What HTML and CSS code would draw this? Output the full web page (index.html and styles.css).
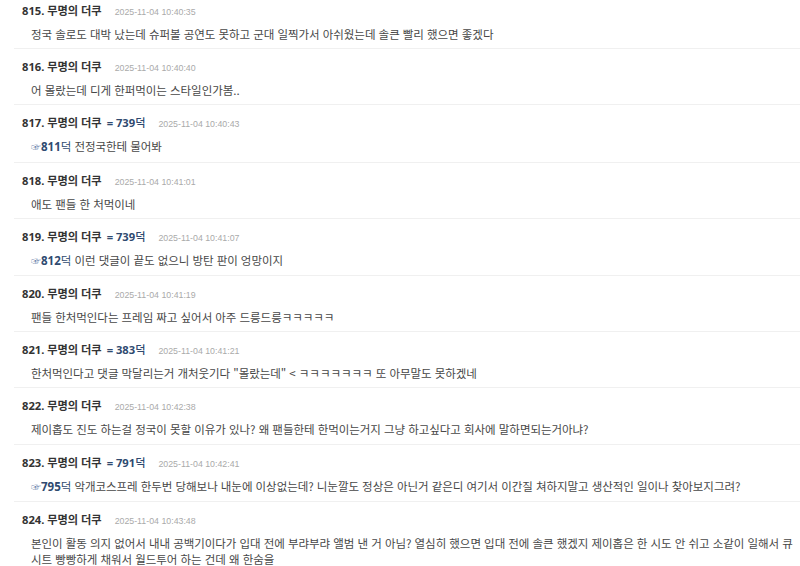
FILE: index.html
```html
<!DOCTYPE html>
<html lang="ko">
<head>
<meta charset="utf-8">
<link rel="stylesheet" href="styles.css">
</head>
<body>
<div class="list">
  <div class="item">
    <div class="head"><span class="name">815. 무명의 더쿠</span><span class="time">2025-11-04 10:40:35</span></div>
    <div class="body">정국 솔로도 대박 났는데 슈퍼볼 공연도 못하고 군대 일찍가서 아쉬웠는데 솔큰 빨리 했으면 좋겠다</div>
  </div>
  <div class="item">
    <div class="head"><span class="name">816. 무명의 더쿠</span><span class="time">2025-11-04 10:40:40</span></div>
    <div class="body">어 몰랐는데 디게 한퍼먹이는 스타일인가봄..</div>
  </div>
  <div class="item">
    <div class="head"><span class="name">817. 무명의 더쿠</span><span class="ref"><b>= 739</b>덕</span><span class="time">2025-11-04 10:40:43</span></div>
    <div class="body"><span class="reply"><span class="hand">☞</span><b>811</b>덕</span> 전정국한테 물어봐</div>
  </div>
  <div class="item">
    <div class="head"><span class="name">818. 무명의 더쿠</span><span class="time">2025-11-04 10:41:01</span></div>
    <div class="body">애도 팬들 한 처먹이네</div>
  </div>
  <div class="item">
    <div class="head"><span class="name">819. 무명의 더쿠</span><span class="ref"><b>= 739</b>덕</span><span class="time">2025-11-04 10:41:07</span></div>
    <div class="body"><span class="reply"><span class="hand">☞</span><b>812</b>덕</span> 이런 댓글이 끝도 없으니 방탄 판이 엉망이지</div>
  </div>
  <div class="item">
    <div class="head"><span class="name">820. 무명의 더쿠</span><span class="time">2025-11-04 10:41:19</span></div>
    <div class="body">팬들 한처먹인다는 프레임 짜고 싶어서 아주 드릉드릉ㅋㅋㅋㅋㅋ</div>
  </div>
  <div class="item">
    <div class="head"><span class="name">821. 무명의 더쿠</span><span class="ref"><b>= 383</b>덕</span><span class="time">2025-11-04 10:41:21</span></div>
    <div class="body">한처먹인다고 댓글 막달리는거 개처웃기다 "몰랐는데" &lt; ㅋㅋㅋㅋㅋㅋㅋ 또 아무말도 못하겠네</div>
  </div>
  <div class="item">
    <div class="head"><span class="name">822. 무명의 더쿠</span><span class="time">2025-11-04 10:42:38</span></div>
    <div class="body">제이홉도 진도 하는걸 정국이 못할 이유가 있나? 왜 팬들한테 한먹이는거지 그냥 하고싶다고 회사에 말하면되는거아냐?</div>
  </div>
  <div class="item">
    <div class="head"><span class="name">823. 무명의 더쿠</span><span class="ref"><b>= 791</b>덕</span><span class="time">2025-11-04 10:42:41</span></div>
    <div class="body"><span class="reply"><span class="hand">☞</span><b>795</b>덕</span> 악개코스프레 한두번 당해보나 내눈에 이상없는데? 니눈깔도 정상은 아닌거 같은디 여기서 이간질 쳐하지말고 생산적인 일이나 찾아보지그려?</div>
  </div>
  <div class="item">
    <div class="head"><span class="name">824. 무명의 더쿠</span><span class="time">2025-11-04 10:43:48</span></div>
    <div class="body">본인이 활동 의지 없어서 내내 공백기이다가 입대 전에 부랴부랴 앨범 낸 거 아님? 열심히 했으면 입대 전에 솔큰 했겠지 제이홉은 한 시도 안 쉬고 소같이 일해서 큐시트 빵빵하게 채워서 월드투어 하는 건데 왜 한숨을</div>
  </div>
</div>
</body>
</html>
```

FILE: styles.css
```css
html, body {
  margin: 0;
  padding: 0;
  background: #ffffff;
  overflow: hidden;
}

.list {
  margin-top: -8px;
  padding-left: 14px;
  font-family: "Noto Sans CJK KR", "Noto Sans", sans-serif;
}

.item {
  border-top: 1px solid #f0f0f0;
  padding-top: 9px;
  padding-bottom: 6.2px;
}

.head {
  display: flex;
  align-items: baseline;
  height: 17px;
  line-height: 17px;
  padding-left: 8px;
  white-space: nowrap;
  overflow: hidden;
}

.name {
  font-family: "Noto Sans", "Noto Sans CJK KR", sans-serif;
  font-weight: 700;
  font-size: 11.2px;
  color: #333333;
}

.ref {
  margin-left: 5px;
  font-size: 11.2px;
  color: #2f4a70;
  font-weight: 500;
}

.ref b {
  font-family: "Noto Sans", sans-serif;
  font-weight: 700;
}

.time {
  margin-left: 13px;
  font-family: "Liberation Sans", sans-serif;
  font-size: 8.8px;
  color: #aaaaaa;
}

.body {
  margin-top: 7px;
  padding-left: 17px;
  padding-right: 4px;
  font-size: 11.5px;
  line-height: 16px;
  letter-spacing: -0.05px;
  color: #474747;
}

.reply {
  color: #2f4a70;
}

.reply b {
  font-family: "Noto Sans", sans-serif;
  font-weight: 700;
  letter-spacing: 0;
}

.hand {
  display: inline-block;
  font-family: "Noto Sans CJK KR", "DejaVu Sans", sans-serif;
  font-size: 10px;
  line-height: 10px;
  color: #5d7aa6;
  letter-spacing: 0;
}
```
